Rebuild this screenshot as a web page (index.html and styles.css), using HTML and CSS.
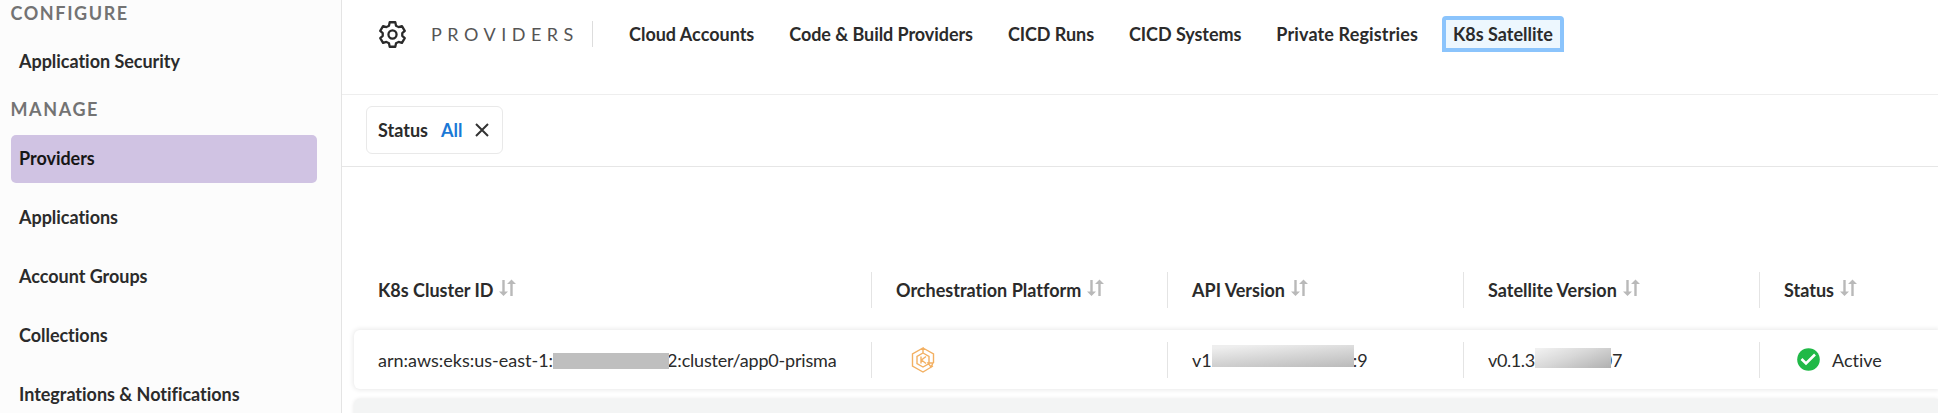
FILE: index.html
```html
<!DOCTYPE html>
<html lang="en">
<head>
<meta charset="utf-8">
<title>Providers</title>
<link rel="stylesheet" href="styles.css">
</head>
<body>
<svg width="0" height="0" class="defs">
  <symbol id="sort" viewBox="0 0 17 18"><path d="M4.500 1v13M12.500 17V4" fill="none" stroke="#b9b9b9" stroke-width="2.400"/><path d="M0 12.500h9L4.500 17zM8 5h9L12.500 .5z" fill="#b9b9b9"/></symbol>
</svg>
<div class="app">
  <aside class="sidebar">
    <h2 class="group">CONFIGURE</h2>
    <a class="item first">Application Security</a>
    <h2 class="group">MANAGE</h2>
    <nav class="items">
      <a class="item active">Providers</a>
      <a class="item">Applications</a>
      <a class="item">Account Groups</a>
      <a class="item">Collections</a>
      <a class="item">Integrations &amp; Noti<span class="lig">fi</span>cations</a>
    </nav>
  </aside>
  <main class="main">
    <header class="topbar">
      <svg class="gear" viewBox="0 0 26 26" fill="none" stroke="#2a2a2a" stroke-width="2.200" stroke-linejoin="round"><circle cx="13" cy="13" r="3.900"/><path d="M10.300 1.200h5.400l.7 3.300 2.500 1.400 3.200-1 2.700 4.600-2.400 2.200v2.600l2.400 2.200-2.700 4.600-3.200-1-2.500 1.400-.7 3.300h-5.400l-.7-3.300-2.500-1.400-3.200 1-2.700-4.600 2.400-2.200v-2.600l-2.400-2.200 2.700-4.600 3.200 1 2.500-1.400z"/></svg>
      <h1 class="title">PROVIDERS</h1>
      <nav class="tabs">
        <a class="tab">Cloud Accounts</a>
        <a class="tab code">Code &amp; Build Providers</a>
        <a class="tab cicd">CICD Runs</a>
        <a class="tab cicd">CICD Systems</a>
        <a class="tab registries">Private Registries</a>
        <a class="tab selected">K8s Satellite</a>
      </nav>
    </header>
    <div class="filters">
      <div class="filter"><span>Status</span><span class="value">All</span><svg class="close" viewBox="0 0 14 14"><path d="M1 1l12 12M13 1L1 13" stroke="#333" stroke-width="2" fill="none"/></svg></div>
    </div>
    <section class="table">
      <div class="row head">
        <div class="cell">K8s Cluster ID<svg class="sort"><use href="#sort"/></svg></div>
        <div class="cell">Orchestration Platform<svg class="sort"><use href="#sort"/></svg></div>
        <div class="cell">API Version<svg class="sort"><use href="#sort"/></svg></div>
        <div class="cell">Satellite Version<svg class="sort"><use href="#sort"/></svg></div>
        <div class="cell">Status<svg class="sort"><use href="#sort"/></svg></div>
      </div>
      <div class="row card">
        <div class="cell"><span>arn:aws:eks:us-east-1:</span><span class="mask solid"></span><span class="tail">2:cluster/app0-prisma</span></div>
        <div class="cell"><svg class="eks" viewBox="0 0 24 26" fill="none" stroke="#f3b062" stroke-width="1.400"><path d="M12 1l10.500 6v9M22 19l-10 6L1.500 19V7L12 1v5M12 6l6 3.500v7L12 20l-6-3.500v-7zM10 9.500v7M15 9.500L10.500 13l4.500 3.500M17 16h5l-2 4z"/></svg></div>
        <div class="cell">v1<span class="mask blur-api"></span><span class="api-end">:9</span></div>
        <div class="cell"><span class="sat">v0.1.3</span><span class="mask blur-sat"></span><span class="sat-end">07</span></div>
        <div class="cell"><svg class="check" viewBox="0 0 23 23"><circle cx="11.500" cy="11.500" r="11.300" fill="#20b947"/><path d="M4.500 11l4.500 4.500 9-9" fill="none" stroke="#fff" stroke-width="2.600"/></svg>Active</div>
      </div>
      <div class="row next"></div>
    </section>
  </main>
</div>
</body>
</html>
```
FILE: styles.css
```css
* { box-sizing: border-box; }
body { margin: 0; font-family: Lato, sans-serif; font-size: 18px; font-variant-ligatures: none; color: #2b2b2b; background: #fff; overflow: hidden; }
.lig { font-variant-ligatures: normal; }
.defs { display: block; }
.app { display: flex; height: 413px; }
.sidebar { flex: none; width: 342px; padding: 0 24px 0 10.500px; background: #fcfcfc; border-right: 1px solid #e4e4e4; white-space: nowrap; }
.group { margin: 0; height: 26px; line-height: 26px; font-size: 18px; font-weight: 700; letter-spacing: 1.600px; color: #737373; }
.item { display: block; height: 48px; line-height: 47px; padding-left: 8.500px; border-radius: 5px; font-weight: 700; letter-spacing: -.03px; }
.item.first { margin: 11px 0; line-height: 48px; }
.items { display: flex; flex-direction: column; gap: 11px; margin-top: 13px; }
.item.active { background: #d0c3e3; color: #161616; }
.main { flex: 1; min-width: 0; overflow: hidden; }
.topbar { display: flex; align-items: center; height: 95px; padding: 0 0 26px 37px; border-bottom: 1px solid #eee; }
.gear { width: 27px; height: 27px; }
.title { margin: 0 0 0 25px; width: 162px; height: 26px; line-height: 26px; font-size: 18px; font-weight: 400; letter-spacing: 5.500px; color: #555; border-right: 1px solid #ddd; }
.tabs { display: flex; align-items: center; margin-left: 25px; white-space: nowrap; }
.tab { height: 36px; line-height: 28px; padding: 0 7px; margin-right: 13px; border: 4px solid transparent; font-weight: 700; }
.code { letter-spacing: -.07px; }
.cicd { letter-spacing: -.06px; }
.registries { letter-spacing: .13px; }
.tab.selected { background: #edf7fe; border-color: #8bc4fc; border-radius: 4px 4px 0 0; }
.filters { height: 72px; padding: 11px 0 0 24px; border-bottom: 1px solid #e6e6e6; }
.filter { display: flex; align-items: center; width: 137px; height: 48px; padding-left: 11px; border: 1px solid #e9e9e9; border-radius: 6px; font-weight: 700; }
.value { margin-left: 13px; color: #1a78d6; }
.close { width: 14px; height: 14px; margin-left: 13px; }
.table { padding: 92px 0 0 12px; }
.row { display: grid; grid-template-columns: 517px 296px 296px 296px 296px; align-items: center; white-space: nowrap; }
.cell { display: flex; align-items: center; height: 36px; padding-left: 24px; border-left: 1px solid #e4e4e4; }
.cell:first-child { border-left: 0; }
.head { height: 62px; font-weight: 700; }
.sort { width: 17px; height: 18px; margin: -4px 0 0 6px; }
.card { height: 59px; margin-top: 9px; border-radius: 6px 0 0 6px; box-shadow: 0 0 5px 1px rgba(0,0,0,.09); }
.mask { display: block; flex: none; z-index: 1; }
.solid { width: 116px; height: 16px; margin-top: 2px; background: #bfbfbf; }
.tail { margin-left: -2px; letter-spacing: -.2px; }
.blur-api { width: 142px; height: 22px; margin-top: -8px; background: linear-gradient(175deg, #eee 10%, #d6d6d6 50%, #bababa); }
.api-end { margin-left: -1px; }
.sat { letter-spacing: -.4px; }
.blur-sat { width: 76px; height: 20px; margin-top: -4px; background: linear-gradient(160deg, #f0f0f0 5%, #d8d8d8 45%, #b0b0b0); }
.sat-end { margin-left: -9px; letter-spacing: -.2px; }
.eks { width: 24px; height: 26px; margin-left: 15px; }
.check { width: 23px; height: 23px; margin: 0 12px 0 13px; }
.next { height: 40px; margin-top: 10px; background: #f3f4f4; border-radius: 6px 0 0 0; box-shadow: 0 0 4px rgba(0,0,0,.1); }
```
